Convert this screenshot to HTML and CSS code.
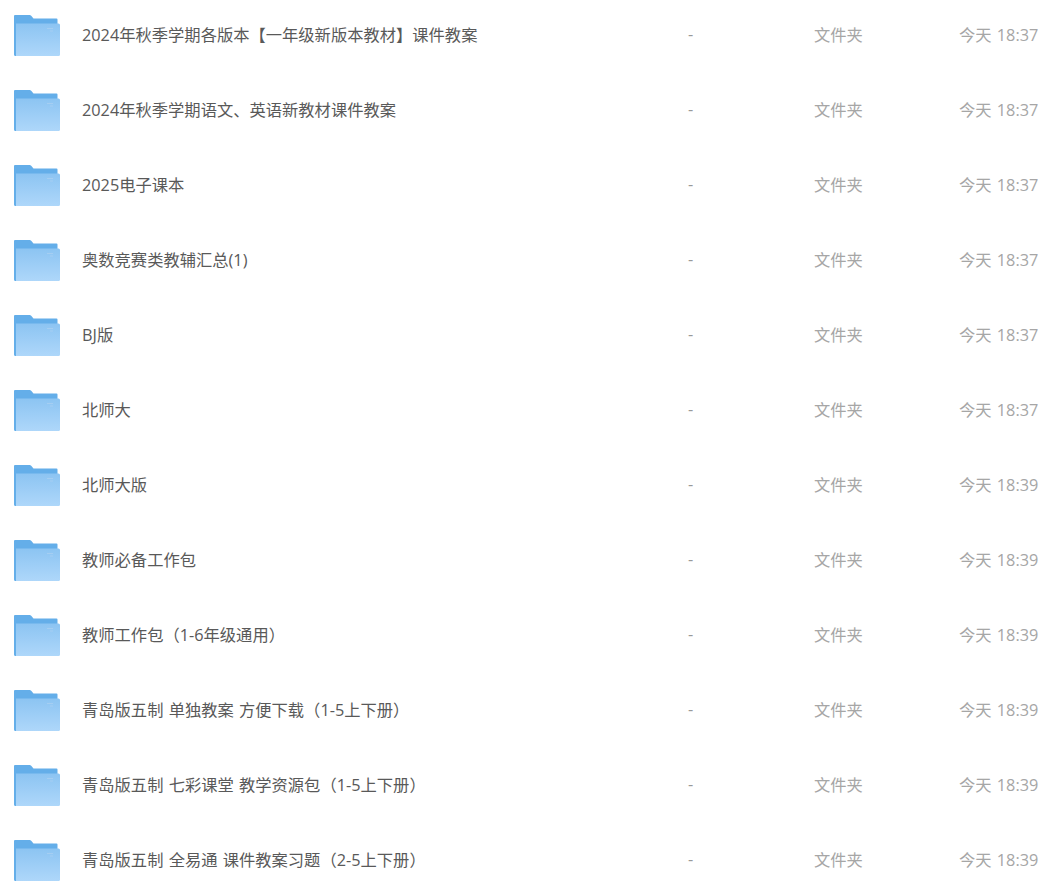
FILE: index.html
```html
<!DOCTYPE html>
<html lang="zh-CN">
<head>
  <meta charset="UTF-8" />
  <title>文件列表</title>
  <link rel="stylesheet" href="styles.css">
</head>
<body>

<svg class="defs" width="0" height="0" aria-hidden="true">
  <defs>
    <linearGradient id="folderFront" x1="0" y1="0" x2="0" y2="1">
      <stop offset="0" stop-color="#8cc4f2"/>
      <stop offset="1" stop-color="#aed7fa"/>
    </linearGradient>
    <symbol id="folder" viewBox="0 0 46 41">
      <path d="M1 0H15.500Q16.500 0 17.200 .8L19.500 3.500H42.500Q43.500 3.500 43.500 4.500V12H3V41H1.500Q0 41 0 39.500V1Q0 0 1 0Z" fill="#64aee9"/>
      <path d="M2 8.500H44.500Q46 8.500 46 10V39.500Q46 41 44.500 41H2Z" fill="url(#folderFront)"/>
      <path d="M33 13.500H39M36 16H39" stroke="#a5cef2" stroke-width="1" fill="none"/>
    </symbol>
  </defs>
</svg>

<div class="file-list">
  <div class="file-row">
    <svg class="folder-icon"><use href="#folder"/></svg>
    <div class="file-name">2024年秋季学期各版本【一年级新版本教材】课件教案</div>
    <div class="file-size">-</div>
    <div class="file-type">文件夹</div>
    <div class="file-time">今天 18:37</div>
  </div>
  <div class="file-row">
    <svg class="folder-icon"><use href="#folder"/></svg>
    <div class="file-name">2024年秋季学期语文、英语新教材课件教案</div>
    <div class="file-size">-</div>
    <div class="file-type">文件夹</div>
    <div class="file-time">今天 18:37</div>
  </div>
  <div class="file-row">
    <svg class="folder-icon"><use href="#folder"/></svg>
    <div class="file-name">2025电子课本</div>
    <div class="file-size">-</div>
    <div class="file-type">文件夹</div>
    <div class="file-time">今天 18:37</div>
  </div>
  <div class="file-row">
    <svg class="folder-icon"><use href="#folder"/></svg>
    <div class="file-name">奥数竞赛类教辅汇总(1)</div>
    <div class="file-size">-</div>
    <div class="file-type">文件夹</div>
    <div class="file-time">今天 18:37</div>
  </div>
  <div class="file-row">
    <svg class="folder-icon"><use href="#folder"/></svg>
    <div class="file-name">BJ版</div>
    <div class="file-size">-</div>
    <div class="file-type">文件夹</div>
    <div class="file-time">今天 18:37</div>
  </div>
  <div class="file-row">
    <svg class="folder-icon"><use href="#folder"/></svg>
    <div class="file-name">北师大</div>
    <div class="file-size">-</div>
    <div class="file-type">文件夹</div>
    <div class="file-time">今天 18:37</div>
  </div>
  <div class="file-row">
    <svg class="folder-icon"><use href="#folder"/></svg>
    <div class="file-name">北师大版</div>
    <div class="file-size">-</div>
    <div class="file-type">文件夹</div>
    <div class="file-time">今天 18:39</div>
  </div>
  <div class="file-row">
    <svg class="folder-icon"><use href="#folder"/></svg>
    <div class="file-name">教师必备工作包</div>
    <div class="file-size">-</div>
    <div class="file-type">文件夹</div>
    <div class="file-time">今天 18:39</div>
  </div>
  <div class="file-row">
    <svg class="folder-icon"><use href="#folder"/></svg>
    <div class="file-name">教师工作包（1-6年级通用）</div>
    <div class="file-size">-</div>
    <div class="file-type">文件夹</div>
    <div class="file-time">今天 18:39</div>
  </div>
  <div class="file-row">
    <svg class="folder-icon"><use href="#folder"/></svg>
    <div class="file-name">青岛版五制 单独教案 方便下载（1-5上下册）</div>
    <div class="file-size">-</div>
    <div class="file-type">文件夹</div>
    <div class="file-time">今天 18:39</div>
  </div>
  <div class="file-row">
    <svg class="folder-icon"><use href="#folder"/></svg>
    <div class="file-name">青岛版五制 七彩课堂 教学资源包（1-5上下册）</div>
    <div class="file-size">-</div>
    <div class="file-type">文件夹</div>
    <div class="file-time">今天 18:39</div>
  </div>
  <div class="file-row">
    <svg class="folder-icon"><use href="#folder"/></svg>
    <div class="file-name">青岛版五制 全易通 课件教案习题（2-5上下册）</div>
    <div class="file-size">-</div>
    <div class="file-type">文件夹</div>
    <div class="file-time">今天 18:39</div>
  </div>
</div>

</body>
</html>
```

FILE: styles.css
```css
html, body {
  height: 100%;
  overflow: hidden;
}

body {
  margin: 0;
  background: #fff;
  font-family: "Open Sans", "Noto Sans CJK SC", sans-serif;
  font-size: 16.3px;
  word-spacing: 1px;
  color: #a6a6a6;
}

.defs {
  display: block;
  height: 0;
}

.file-list {
  margin-top: -4px;
  padding: 0 17px 0 14px;
}

.file-row {
  display: grid;
  grid-template-columns: 46px 1fr 126px 145px 79px;
  align-items: center;
  height: 75px;
}

.folder-icon {
  width: 46px;
  height: 41px;
  margin-top: 4px;
}

.file-name {
  padding-left: 22px;
  color: #595959;
}

.file-size {
  color: #999;
}

.file-time {
  text-align: right;
  white-space: nowrap;
}
```
